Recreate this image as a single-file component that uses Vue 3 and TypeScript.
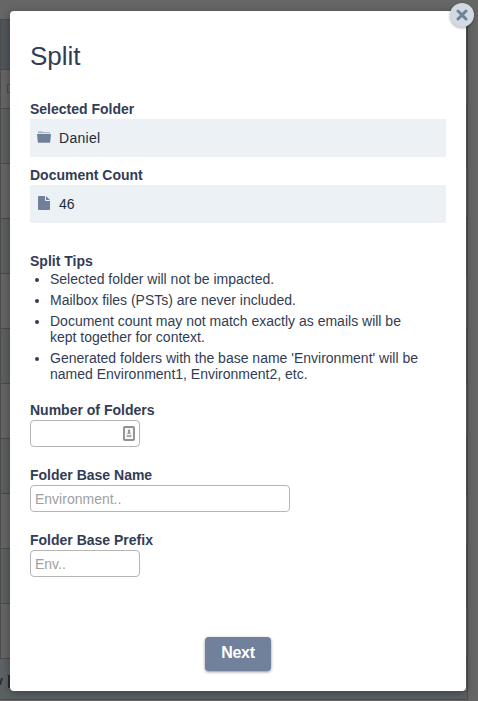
<script setup lang="ts">
import { ref } from 'vue'

const tips: string[][] = [
  ['Selected folder will not be impacted.'],
  ['Mailbox files (PSTs) are never included.'],
  ['Document count may not match exactly as emails will be', 'kept together for context.'],
  ["Generated folders with the base name 'Environment' will be", 'named Environment1, Environment2, etc.'],
]
const folderCount = ref('')
const baseName = ref('')
const basePrefix = ref('')
</script>

<template>
  <div class="screen">
    <div class="backdrop" aria-hidden="true">
      <div class="table">
        <div class="row head"></div>
        <div class="row filter"><span class="filter-box"></span></div>
        <div v-for="n in 10" :key="n" class="row"></div>
      </div>
      <div class="footer"><span class="slash"></span><span class="mark"></span></div>
    </div>
    <section class="modal" role="dialog">
      <button class="close" aria-label="Close">
        <svg viewBox="0 0 12 12" width="12" height="12"><path d="M2 2 10 10M10 2 2 10" /></svg>
      </button>
      <h1>Split</h1>
      <h2>Selected Folder</h2>
      <div class="value">
        <svg viewBox="0 0 16 14" width="16" height="14">
          <path fill="#abb6c6" d="M2 3.3V2.1q0-.8.8-.8H6l1 .8h6.2q.8 0 .8.8v.4z" />
          <path fill="#71809a" d="M1.4 4h13.2q.5 0 .4.5l-.8 7.4q-.1.8-.9.8H2.7q-.8 0-.9-.8L1 4.5q-.1-.5.4-.5z" />
        </svg>
        <span class="name">Daniel</span>
      </div>
      <h2>Document Count</h2>
      <div class="value">
        <svg viewBox="0 0 16 14" width="16" height="14">
          <path fill="#71809a" d="M3 0h6v4.2q0 .8.8.8H14v8q0 1-1 1H3q-1 0-1-1V1q0-1 1-1zM10 0l4 4h-4z" />
        </svg>
        <span>46</span>
      </div>
      <h2 class="tips-title">Split Tips</h2>
      <ul>
        <li v-for="(tip, i) in tips" :key="i">
          <span v-for="line in tip" :key="line">{{ line }}</span>
        </li>
      </ul>
      <label class="field">
        <span>Number of Folders</span>
        <span class="input small">
          <input v-model="folderCount" type="text" />
          <svg viewBox="0 0 12 15" width="12" height="15">
            <rect x="1" y="1" width="10" height="13" rx=".8" fill="#f7f7f7" stroke="#929292" stroke-width="1.9" />
            <circle cx="6" cy="4.6" r="1" fill="#888" />
            <path fill="#888" d="M5.3 5h1.4v1.2L8.2 7.8H3.8l1.5-1.6z" />
            <path fill="#aaa" d="M3.7 9h4.6v2H3.7z" />
          </svg>
        </span>
      </label>
      <label class="field">
        <span>Folder Base Name</span>
        <span class="input"><input v-model="baseName" type="text" placeholder="Environment.." /></span>
      </label>
      <label class="field">
        <span>Folder Base Prefix</span>
        <span class="input small"><input v-model="basePrefix" type="text" placeholder="Env.." /></span>
      </label>
      <button class="next">Next</button>
    </section>
  </div>
</template>

<style>
body {
  background: #666;
}
</style>

<style scoped>
* {
  box-sizing: border-box;
}
.screen {
  display: grid;
  width: 478px;
  height: 701px;
  overflow: hidden;
  font-family: 'Liberation Sans', Arial, sans-serif;
  font-size: 14px;
  line-height: 16px;
  color: #323c55;
}
.backdrop {
  grid-area: 1 / 1;
  padding-top: 19px;
  width: 468px;
  height: 700px;
  border-bottom: 1px solid #4b4d4e;
}
.table {
  border: 1px solid #4c4c4c;
  border-top: 0;
}
.row {
  height: 55px;
  border-top: 1px solid #4a4a4a;
  background: #656565;
}
.row:nth-child(odd) {
  background: #5c6061;
}
.row.head {
  height: 50px;
  background: #51565b;
}
.row.filter {
  height: 39px;
  padding: 14px 0 0 6px;
}
.filter-box {
  display: block;
  width: 20px;
  height: 9px;
  border: 1px solid #4b4b50;
}
.footer {
  display: flex;
  align-items: center;
  height: 40px;
  border-right: 1px solid #4c4c4c;
  background: #5c6163;
}
.slash {
  width: 2px;
  height: 7px;
  margin-top: 4px;
  background: #28303a;
  transform: skewX(-15deg);
}
.mark {
  width: 3px;
  height: 13px;
  margin: 4px 0 0 6px;
  background: #35292a;
}
.modal {
  grid-area: 1 / 1;
  position: relative;
  display: flex;
  flex-direction: column;
  width: 456px;
  height: 680px;
  margin: 11px 0 0 10px;
  padding: 30px 20px 20px;
  border-radius: 4px;
  background: #fff;
  box-shadow: 0 2px 10px rgba(0, 0, 0, 0.35);
}
.close {
  position: absolute;
  top: -8px;
  right: -8px;
  display: flex;
  align-items: center;
  justify-content: center;
  width: 24px;
  height: 24px;
  padding: 0 0 1px;
  border: 0;
  border-radius: 50%;
  background: #d2dae1;
  box-shadow: 0 1px 3px rgba(0, 0, 0, 0.35);
}
.close path {
  fill: none;
  stroke: #71809b;
  stroke-width: 3;
  stroke-linecap: round;
}
h1 {
  margin: 0 0 30px;
  font-size: 26px;
  font-weight: 400;
  line-height: 30px;
}
h2,
.field {
  margin: 0;
  font-size: 14px;
  font-weight: 700;
  line-height: 16px;
  white-space: nowrap;
}
h2 {
  margin-bottom: 2px;
}
.value {
  display: flex;
  align-items: center;
  gap: 7px;
  height: 38px;
  margin-bottom: 10px;
  padding-left: 6px;
  background: #ebf1f5;
  color: #232b39;
}
.value svg {
  margin-bottom: 2px;
}
.name {
  letter-spacing: 0.3px;
}
.tips-title {
  margin-top: 20px;
}
ul {
  display: flex;
  flex-direction: column;
  gap: 5px;
  margin: 0 0 20px;
  padding-left: 20px;
}
li span {
  display: block;
  white-space: nowrap;
}
.field {
  display: flex;
  flex-direction: column;
  gap: 2px;
  height: 65px;
}
.input {
  display: flex;
  align-items: center;
  width: 260px;
  height: 27px;
  padding: 0 4px;
  border: 1px solid #b5b5b5;
  border-radius: 4px;
  background: #fff;
}
.input.small {
  width: 110px;
}
input {
  flex: 1;
  min-width: 0;
  width: 0;
  padding: 0;
  border: 0;
  outline: 0;
  background: transparent;
  font: 400 14px/16px 'Liberation Sans', Arial, sans-serif;
}
input::placeholder {
  color: #a0a0a0;
}
.next {
  align-self: center;
  width: 66px;
  height: 34px;
  margin-top: auto;
  padding: 0 0 3px;
  border: 0;
  border-radius: 4px;
  background: #71809b;
  box-shadow: 0 1px 3px rgba(0, 0, 0, 0.45);
  color: #fff;
  font: 700 16px/18px 'Liberation Sans', Arial, sans-serif;
  letter-spacing: -0.3px;
}
</style>
